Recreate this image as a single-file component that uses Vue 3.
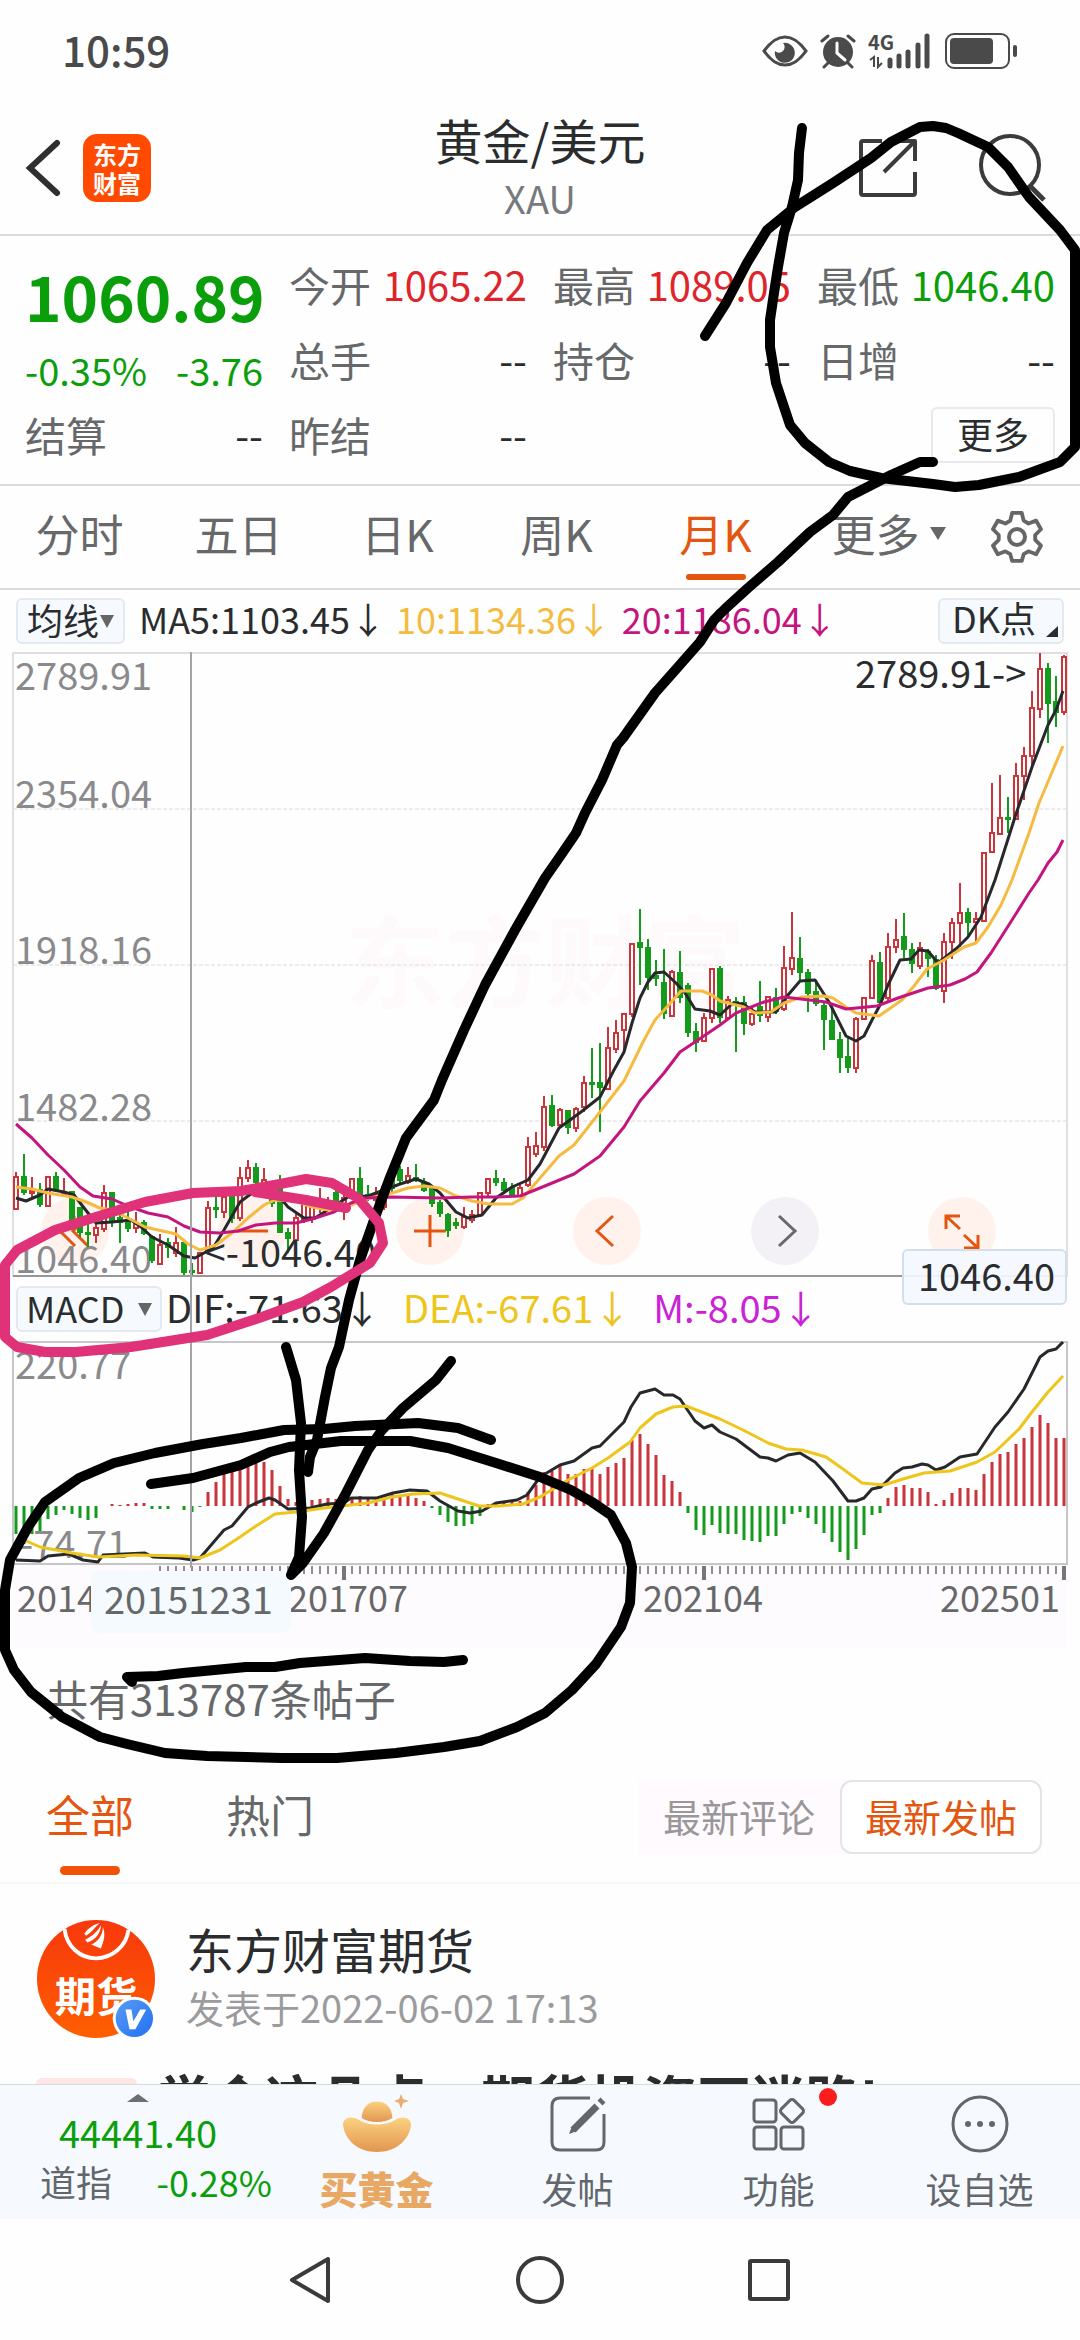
<template>
  <div class="page">
    <div class="status">
      <time>10:59</time>
      <div class="status__icons">
        <svg width="46" height="34" viewBox="0 0 46 34">
          <path d="M2 17C10 6 16 3 23 3s13 3 21 14C36 28 30 31 23 31S10 28 2 17z" fill="none" stroke="#4a4a4a" stroke-width="3" />
          <path d="M21 9a10 10 0 1 1-8 8a5 5 0 0 0 8-8z" fill="#4a4a4a" />
        </svg>
        <svg width="36" height="36" viewBox="0 0 36 36">
          <circle cx="18" cy="19" r="15" fill="#4a4a4a" />
          <path d="M2 8l6-5M34 8l-6-5M8 30l-4 4M28 30l4 4" stroke="#4a4a4a" stroke-width="3" stroke-linecap="round" />
          <path d="M17 10v10l8 7" fill="none" stroke="#fff" stroke-width="3" stroke-linecap="round" />
        </svg>
        <svg width="64" height="36" viewBox="0 0 64 36">
          <text x="0" y="17" font-size="20" font-weight="700" fill="#4a4a4a">4G</text>
          <path d="M2 27l4-3v10M10 24v10l4-4" fill="none" stroke="#4a4a4a" stroke-width="2" />
          <path d="M22 27v6M31 23v10M40 19v14M50 12v21M59 3v30" stroke="#4a4a4a" stroke-width="5" stroke-linecap="round" />
        </svg>
        <svg width="74" height="38" viewBox="0 0 74 38">
          <rect x="2" y="2" width="63" height="34" rx="8" fill="none" stroke="#4a4a4a" stroke-width="2" />
          <rect x="6" y="6" width="43" height="26" rx="4" fill="#4a4a4a" />
          <rect x="69" y="13" width="4" height="12" rx="2" fill="#4a4a4a" />
        </svg>
      </div>
    </div>

    <header class="header">
      <div class="header__left">
        <button class="icon-btn" aria-label="返回">
          <svg width="36" height="60" viewBox="0 0 36 60"><path d="M32 5L5 30l27 25" fill="none" stroke="#2d2f31" stroke-width="6" stroke-linecap="round" /></svg>
        </button>
        <a class="logo" href="#"><span>东方</span><span>财富</span></a>
      </div>
      <div class="header__title">
        <h1>黄金/美元</h1>
        <p>XAU</p>
      </div>
      <div class="header__right">
        <button class="icon-btn" aria-label="分享">
          <svg width="60" height="60" viewBox="0 0 60 60" fill="none" stroke="#3a3b3d" stroke-width="4" stroke-linejoin="round">
            <path d="M24 3H5q-2 0-2 2v50q0 2 2 2h50q2 0 2-2V34M36 3h21v20M57 3L26 34" />
          </svg>
        </button>
        <button class="icon-btn" aria-label="搜索">
          <svg width="70" height="70" viewBox="0 0 70 70" fill="none" stroke="#3a3b3d" stroke-width="4">
            <circle cx="32" cy="32" r="29" /><path d="M52 53l14 14" stroke-width="5" />
          </svg>
        </button>
      </div>
    </header>

    <main class="main">
      <section class="quote">
        <div class="quote__main">
          <strong>1060.89</strong>
          <div class="quote__change"><span>-0.35%</span><span>-3.76</span></div>
          <div class="quote__item"><span>结算</span><b>--</b></div>
        </div>
        <div v-for="(col, c) in quotes" :key="c" class="quote__col">
          <div v-for="q in col" :key="q.label" class="quote__item">
            <span>{{ q.label }}</span><b :class="q.tone">{{ q.value }}</b>
          </div>
          <button v-if="c === 2" class="more">更多</button>
        </div>
      </section>

      <nav class="periods">
        <button
          v-for="p in periods"
          :key="p"
          class="periods__tab"
          :class="{ 'periods__tab--on': p === '月K', 'periods__tab--more': p === '更多' }"
        >
          {{ p }}<svg v-if="p === '更多'" width="16" height="13"><path d="M0 0h16l-8 13z" fill="#666" /></svg>
        </button>
        <button class="icon-btn periods__gear" aria-label="设置">
          <svg width="52" height="54" viewBox="0 0 52 54" fill="none" stroke="#666" stroke-width="4">
            <path d="M21 2h10l2 8 5 3 8-3 5 9-6 6v5l6 6-5 9-8-3-5 3-2 7H21l-2-7-5-3-8 3-5-9 6-6v-5l-6-6 5-9 8 3 5-3z" stroke-linejoin="round" transform="translate(1 1) scale(.96)" />
            <circle cx="26" cy="27" r="8" />
          </svg>
        </button>
      </nav>

      <section class="charts">
        <div class="legend">
          <label class="pick">
            <select aria-label="主图指标"><option>均线</option></select>
            <svg width="14" height="13"><path d="M0 0h14l-7 13z" fill="#666" /></svg>
          </label>
          <span>MA5:1103.45↓</span>
          <span class="legend--ma10">10:1134.36↓</span>
          <span class="legend--ma20">20:1186.04↓</span>
          <button class="dk">DK点<svg width="12" height="11"><path d="M12 0v11H0z" fill="#2a2c2e" /></svg></button>
        </div>

        <div class="price">
          <div class="tools">
            <button v-for="t in tools" :key="t.name" class="tools__btn" :class="{ 'tools__btn--off': t.name === '后移' }" :aria-label="t.name">
              <svg width="68" height="68" viewBox="0 0 68 68"><path :d="t.d" /></svg>
            </button>
          </div>
          <svg class="price__svg" viewBox="0 0 1080 625">
            <text class="watermark" x="545" y="348" text-anchor="middle">东方财富</text>
            <path d="M13 157H1067M13 313H1067M13 469H1067" stroke="#ececee" stroke-width="2" stroke-dasharray="4 2" />
            <path d="M13 625V1H1067V625" fill="none" stroke="#dfdfe2" stroke-width="2" />
            <text v-for="a in priceAxis" :key="a.y" class="axis" x="15" :y="a.y">{{ a.t }}</text>
            <g v-for="(c, i) in candles" :key="i" :class="c[0] ? 'up' : 'down'">
              <path :d="`M${16 + i * 8} ${c[1]}V${c[2]}M${16 + i * 8} ${c[3]}V${c[4]}`" />
              <rect :x="14 + i * 8" :y="c[2]" width="4" :height="Math.max(1, c[3] - c[2])" />
            </g>
            <polyline class="line" :points="ma5" stroke="#26282b" />
            <polyline class="line" :points="ma10" stroke="#f5bb41" />
            <polyline class="line" :points="ma20" stroke="#c4157f" />
            <path d="M13 624H1067" stroke="#97979a" stroke-width="2" />
            <text class="mark" x="855" y="36">2789.91-></text>
            <text class="mark" x="376" y="615" text-anchor="end">&lt;-1046.40</text>
          </svg>
          <span class="price__tag">1046.40</span>
        </div>

        <div class="legend legend--macd">
          <label class="pick pick--macd">
            <select aria-label="副图指标"><option>MACD</option></select>
            <svg width="14" height="13"><path d="M0 0h14l-7 13z" fill="#666" /></svg>
          </label>
          <span>DIF:-71.63↓</span>
          <span class="legend--dea">DEA:-67.61↓</span>
          <span class="legend--m">M:-8.05↓</span>
        </div>

        <div class="macd">
          <svg viewBox="0 0 1080 307">
            <rect x="13" y="224" width="1054" height="83" fill="#fefbfe" />
            <rect x="13" y="1" width="1054" height="222" fill="none" stroke="#c6c6c9" stroke-width="2" />
            <text class="axis" x="15" y="38">220.77</text>
            <text class="axis" x="20" y="217">-74.71</text>
            <path
              v-for="(h, i) in bars"
              :key="i"
              :d="`M${16 + i * 8} 165v${-h}`"
              :stroke="h > 0 ? '#c9353a' : '#149b1c'"
              stroke-width="3"
            />
            <polyline class="line" :points="dif" stroke="#26282b" />
            <polyline class="line" :points="dea" stroke="#edc51b" />
            <path :d="ticks" stroke="#8f8f92" stroke-width="2" />
            <path d="M344 225v14M704 225v14M1064 225v14" stroke="#77777a" stroke-width="4" />
            <text class="date" x="17" y="271">2014</text>
            <text class="date" x="288" y="271">201707</text>
            <text class="date" x="643" y="271">202104</text>
            <text class="date" x="1060" y="271" text-anchor="end">202501</text>
            <rect x="91" y="230" width="200" height="62" rx="8" fill="#f5faff" />
            <text class="date date--now" x="104" y="273">20151231</text>
          </svg>
        </div>
        <i class="crosshair"></i>
      </section>

      <p class="count">共有313787条帖子</p>

      <div class="feed-tabs">
        <button class="feed-tabs__tab feed-tabs__tab--on">全部</button>
        <button class="feed-tabs__tab">热门</button>
        <div class="sort">
          <button class="sort__btn">最新评论</button>
          <button class="sort__btn sort__btn--on">最新发帖</button>
        </div>
      </div>

      <article class="post">
        <div class="post__head">
          <svg class="avatar" width="120" height="122" viewBox="0 0 120 122">
            <defs>
              <linearGradient id="av" x1="0" y1="0" x2="0" y2="1"><stop offset="0" stop-color="#f7380d" /><stop offset="1" stop-color="#ff5f00" /></linearGradient>
              <linearGradient id="vb" x1="0" y1="0" x2="1" y2="1"><stop offset="0" stop-color="#5a9bf2" /><stop offset="1" stop-color="#2170f5" /></linearGradient>
            </defs>
            <circle cx="60" cy="60" r="60" fill="url(#av)" />
            <path d="M28 9c2 18 16 30 32 30s31-12 33-29" fill="none" stroke="#fff" stroke-width="4" />
            <path d="M48 14c5-7 11-10 16-11-5 4-8 9-14 13zM49 20c8-4 13-9 16-15 0 9-6 15-14 18zM55 25c7-3 12-10 12-18 3 8 1 14-2 22z" fill="#fff" />
            <text x="60" y="94" text-anchor="middle" font-size="42" font-weight="700" fill="#fff">期货</text>
            <circle cx="99" cy="100" r="22" fill="#fff" />
            <circle cx="99" cy="100" r="19" fill="url(#vb)" />
            <path d="M90 91h6l2 12 7-12h6l-11 20h-6z" fill="#fff" />
          </svg>
          <div>
            <h2>东方财富期货</h2>
            <p>发表于2022-06-02 17:13</p>
          </div>
        </div>
        <div class="post__title"><span class="post__tag">精华</span><h3>学会这几点，期货投资不迷路!</h3></div>
      </article>
    </main>

    <footer class="bar">
      <a class="bar__index" href="#">
        <svg width="22" height="8"><path d="M0 8L11 0l11 8z" fill="#6c7076" /></svg>
        <span class="bar__value">44441.40</span>
        <span class="bar__row"><span>道指</span><b>-0.28%</b></span>
      </a>
      <a class="bar__item bar__item--gold" href="#">
        <svg width="70" height="62" viewBox="0 0 70 62">
          <defs>
            <linearGradient id="gold" x1="0" y1="0" x2="0" y2="1"><stop offset="0" stop-color="#fbd27f" /><stop offset="1" stop-color="#e29550" /></linearGradient>
          </defs>
          <path d="M1 32c0-7 8-10 16-5 10 6 26 6 36 0 8-5 16-2 16 5C67 48 53 59 35 59S3 48 1 32z" fill="url(#gold)" />
          <path d="M19 25C20 14 26 8 35 8s15 6 16 17c-8 6-24 6-32 0z" fill="url(#gold)" stroke="#f6faff" />
          <path d="M59 1l2 5 6 2-6 2-2 6-2-6-5-2 5-2z" fill="#e8ad70" />
        </svg>
        <span>买黄金</span>
      </a>
      <a class="bar__item" href="#">
        <svg width="62" height="62" viewBox="0 0 62 62" fill="none" stroke="#63676c" stroke-width="3">
          <path d="M43 5H13q-8 0-8 8v36q0 8 8 8h36q8 0 8-8V21" />
          <path d="M26 37L50 13M53 10l3-3" stroke-width="7" /><path d="M22 41l3-8 5 5z" fill="#63676c" stroke="none" />
        </svg>
        <span>发帖</span>
      </a>
      <a class="bar__item" href="#">
        <svg width="62" height="62" viewBox="0 0 62 62" fill="none" stroke="#63676c" stroke-width="3">
          <rect x="6" y="7" width="22" height="22" rx="3" /><rect x="6" y="34" width="22" height="22" rx="3" /><rect x="33" y="34" width="22" height="22" rx="3" />
          <rect x="35" y="9" width="18" height="18" rx="3" transform="rotate(45 44 18)" />
        </svg>
        <i class="dot"></i>
        <span>功能</span>
      </a>
      <a class="bar__item" href="#">
        <svg width="62" height="62" viewBox="0 0 62 62" fill="#63676c">
          <circle cx="31" cy="31" r="27" fill="none" stroke="#63676c" stroke-width="3" />
          <circle cx="19" cy="31" r="3" /><circle cx="31" cy="31" r="3" /><circle cx="43" cy="31" r="3" />
        </svg>
        <span>设自选</span>
      </a>
    </footer>

    <nav class="sysnav">
      <button class="icon-btn" aria-label="返回键"><svg width="48" height="50" viewBox="0 0 48 50"><path d="M41 4v42L5 25z" /></svg></button>
      <button class="icon-btn" aria-label="主页键"><svg width="50" height="50" viewBox="0 0 50 50"><circle cx="25" cy="25" r="22" /></svg></button>
      <button class="icon-btn" aria-label="多任务键"><svg width="48" height="50" viewBox="0 0 48 50"><rect x="5" y="6" width="38" height="38" rx="1" /></svg></button>
    </nav>

    <!-- handwritten markup over the screen -->
    <svg class="ink" viewBox="0 0 1080 2340" preserveAspectRatio="xMidYMin meet">
      <polyline v-for="(s, i) in ink" :key="i" :points="s" stroke="#000" />
      <polyline :points="pink" stroke="#e03278" />
    </svg>
  </div>
</template>

<script setup>
const quotes = [
  [
    { label: '今开', value: '1065.22', tone: 'red' },
    { label: '总手', value: '--' },
    { label: '昨结', value: '--' }
  ],
  [
    { label: '最高', value: '1089.05', tone: 'red' },
    { label: '持仓', value: '--' }
  ],
  [
    { label: '最低', value: '1046.40', tone: 'green' },
    { label: '日增', value: '--' }
  ]
]

const periods = ['分时', '五日', '日K', '周K', '月K', '更多']

const tools = [
  { name: '最左', d: 'M34 19L19 34l15 15M47 19L32 34l15 15' },
  { name: '缩小', d: 'M18 34h32' },
  { name: '放大', d: 'M18 34h32M34 18v32' },
  { name: '前移', d: 'M40 19L24 34l16 15' },
  { name: '后移', d: 'M28 19l16 15-16 15' },
  { name: '全屏', d: 'M18 32V19h14M18 19l14 13M36 51h14V38M50 51L36 38' }
]

const priceAxis = [
  { t: '2789.91', y: 38 },
  { t: '2354.04', y: 156 },
  { t: '1918.16', y: 312 },
  { t: '1482.28', y: 469 },
  { t: '1046.40', y: 621 }
]

// rising flag, high, body top, body bottom, low
const candles = [
  [1, 520, 525, 557, 558], [0, 502, 525, 540, 543], [1, 525, 539, 541, 546], [0, 531, 538, 552, 555],
  [1, 525, 525, 554, 555], [0, 520, 525, 538, 540], [1, 526, 540, 542, 545], [0, 540, 540, 568, 578],
  [0, 555, 556, 580, 585], [0, 571, 581, 582, 595], [1, 571, 576, 583, 591], [1, 533, 541, 577, 580],
  [0, 541, 541, 570, 575], [0, 556, 566, 570, 591], [0, 555, 568, 576, 580], [1, 560, 571, 576, 581],
  [0, 568, 571, 581, 583], [0, 583, 585, 608, 611], [1, 582, 593, 612, 613], [0, 586, 591, 595, 606],
  [1, 575, 591, 601, 605], [0, 591, 591, 620, 624], [0, 611, 619, 620, 625], [1, 600, 601, 621, 622],
  [1, 549, 556, 598, 601], [0, 543, 556, 557, 566], [1, 540, 545, 560, 566], [0, 545, 545, 566, 571],
  [1, 515, 526, 566, 569], [1, 508, 516, 526, 530], [0, 511, 516, 530, 533], [1, 516, 528, 538, 541],
  [0, 535, 538, 551, 555], [0, 523, 535, 580, 581], [0, 576, 581, 586, 601], [1, 561, 566, 588, 591],
  [1, 546, 551, 568, 571], [1, 551, 555, 566, 571], [1, 536, 550, 555, 561], [1, 545, 550, 553, 558],
  [0, 533, 541, 551, 556], [1, 543, 546, 556, 568], [1, 526, 527, 545, 546], [0, 515, 527, 543, 545],
  [0, 533, 543, 545, 549], [1, 535, 543, 548, 553], [1, 531, 535, 555, 558], [0, 523, 525, 536, 540],
  [0, 514, 518, 528, 532], [1, 515, 524, 530, 532], [0, 512, 526, 528, 530], [0, 526, 531, 538, 540],
  [0, 535, 536, 551, 555], [0, 548, 551, 561, 565], [0, 561, 563, 578, 585], [0, 566, 571, 573, 577],
  [1, 555, 565, 575, 577], [1, 558, 563, 568, 571], [1, 540, 541, 563, 565], [1, 526, 527, 541, 544],
  [0, 518, 527, 530, 534], [0, 526, 531, 538, 542], [0, 531, 536, 543, 545], [1, 531, 536, 544, 545],
  [1, 485, 495, 533, 535], [1, 480, 494, 502, 505], [1, 444, 455, 495, 499], [0, 443, 454, 473, 475],
  [1, 456, 458, 473, 476], [0, 458, 459, 475, 482], [1, 455, 457, 476, 480], [1, 424, 431, 455, 460],
  [0, 396, 431, 432, 446], [0, 391, 431, 435, 480], [1, 375, 396, 437, 438], [1, 368, 381, 397, 401],
  [1, 361, 362, 378, 401], [1, 291, 292, 362, 365], [0, 257, 291, 295, 333], [0, 287, 296, 325, 338],
  [0, 308, 324, 326, 334], [0, 297, 331, 361, 367], [1, 318, 320, 364, 365], [0, 299, 321, 345, 351],
  [0, 331, 334, 380, 385], [0, 371, 380, 390, 400], [1, 361, 366, 389, 390], [1, 316, 317, 366, 371],
  [0, 314, 317, 365, 371], [1, 344, 348, 366, 368], [0, 345, 350, 351, 400], [0, 344, 351, 371, 383],
  [1, 356, 362, 372, 374], [0, 329, 355, 363, 370], [1, 345, 345, 365, 370], [0, 336, 346, 359, 362],
  [1, 294, 316, 357, 359], [1, 260, 306, 317, 323], [0, 285, 307, 320, 328], [0, 317, 321, 341, 360],
  [0, 328, 340, 351, 354], [0, 351, 354, 367, 398], [0, 356, 369, 387, 388], [0, 380, 388, 405, 421],
  [0, 386, 405, 415, 421], [1, 365, 367, 416, 421], [1, 345, 346, 367, 368], [1, 303, 309, 346, 347],
  [0, 300, 311, 350, 351], [1, 281, 295, 346, 351], [1, 267, 288, 295, 301], [0, 261, 285, 297, 306],
  [0, 291, 298, 311, 321], [1, 290, 296, 314, 317], [0, 297, 300, 306, 325], [0, 303, 308, 336, 338],
  [1, 281, 290, 339, 351], [1, 266, 271, 290, 307], [1, 231, 261, 271, 295], [0, 256, 261, 270, 286],
  [1, 260, 267, 270, 291], [1, 201, 201, 269, 270], [1, 131, 181, 200, 201], [1, 123, 166, 182, 183],
  [0, 145, 166, 167, 181], [1, 111, 124, 167, 168], [1, 95, 104, 124, 148], [1, 39, 56, 104, 114],
  [1, 1, 17, 57, 66], [0, 11, 17, 51, 91], [0, 24, 50, 60, 75], [1, 3, 5, 60, 63]
]

const ma5 = '16,546 26,549 40,543 48,537 64,540 74,543 88,561 96,571 112,570 131,568 141,575 152,585 168,593 184,604 195,606 213,596 224,578 240,550 256,538 272,536 288,555 304,566 315,566 331,556 348,545 368,544 384,538 400,532 416,527 429,532 440,541 456,560 468,566 482,563 496,546 512,535 528,528 540,512 559,476 581,460 600,445 614,418 624,400 632,371 640,346 648,330 655,321 664,320 676,331 685,341 695,357 710,359 720,363 733,351 743,352 755,360 776,360 788,343 800,329 815,328 829,350 846,384 856,389 864,384 872,368 880,353 888,333 900,308 911,307 919,298 928,299 938,311 957,296 968,285 981,265 995,228 1015,165 1032,115 1048,73 1056,58 1063,39'
const ma10 = '16,535 32,537 48,541 72,545 86,550 100,556 112,558 128,566 145,575 158,578 176,582 188,592 200,598 216,593 232,581 248,566 264,553 275,548 296,549 312,555 328,558 344,557 362,548 392,541 408,536 424,534 440,536 456,544 472,549 489,552 512,552 523,546 540,526 559,504 574,493 600,460 624,429 643,390 655,368 666,356 681,339 702,339 712,343 720,349 744,355 755,361 771,360 784,351 802,345 824,344 833,346 846,355 856,361 879,364 902,348 914,334 927,317 944,308 964,295 976,291 988,275 1001,253 1012,228 1029,181 1039,151 1050,125 1063,94'
const ma20 = '16,472 32,486 48,503 64,518 80,535 93,544 112,547 128,554 148,561 168,565 184,574 200,580 220,581 238,579 256,573 275,571 296,571 312,567 334,560 351,551 365,546 392,545 440,546 472,545 496,545 520,544 540,536 574,522 600,504 624,475 640,449 664,421 680,400 695,390 720,373 736,361 764,350 784,345 826,350 846,357 877,354 898,346 928,336 950,333 965,327 977,320 991,301 1012,268 1029,241 1038,228 1048,211 1057,200 1063,188'

const bars = [
  -28, -38, -28, -25, -13, -9, -4, -8, -12, -14, -12, 0, 2, 1, 2, 3, 3, -3, -3, -3, 0, -4,
  -6, -1, 14, 24, 32, 34, 39, 42, 43, 44, 36, 20, 7, 4, 4, 6, 7, 8, 7, 8, 8, 10,
  9, 8, 8, 12, 11, 10, 8, 5, -2, -9, -16, -20, -20, -18, -10, 2, 4, 4, 4, 5, 14, 21,
  34, 35, 41, 32, 32, 37, 37, 32, 39, 43, 48, 66, 72, 62, 51, 31, 25, 14, -7, -24, -29, -19,
  -27, -28, -28, -34, -35, -36, -30, -30, -18, -8, -6, -12, -18, -27, -36, -46, -54, -43, -29, -9, -7, 8,
  19, 21, 18, 18, 14, 2, 6, 13, 18, 18, 16, 32, 44, 52, 54, 62, 68, 79, 91, 83, 68, 68
]

const dif = '16,219 40,220 48,215 69,213 83,219 98,221 103,214 145,212 153,216 179,217 193,219 200,217 224,189 232,185 248,166 256,162 269,157 275,159 288,168 310,167 327,163 344,162 351,157 377,157 393,152 410,149 427,150 440,160 458,170 470,172 482,170 496,162 517,159 527,154 540,136 560,124 574,120 592,107 600,105 624,81 631,66 640,52 655,48 664,54 673,54 680,58 695,80 704,87 712,84 720,91 736,98 760,116 768,117 776,120 788,114 800,112 815,121 833,140 848,160 856,160 864,157 872,148 881,146 895,132 903,127 912,126 922,123 928,124 936,129 945,126 960,116 977,113 995,86 1008,71 1024,48 1040,16 1048,10 1056,8 1063,1'
const dea = '16,198 24,199 40,206 72,212 98,216 136,214 184,215 200,217 220,209 240,196 256,185 275,173 296,171 324,167 368,162 392,156 413,153 440,152 458,158 479,165 499,165 523,163 540,156 568,139 592,127 608,117 630,101 640,87 656,73 673,66 686,65 720,78 743,89 768,102 786,108 802,109 826,116 843,128 862,142 884,144 903,138 924,132 950,130 977,121 995,111 1019,88 1032,71 1048,51 1063,35'

const ticks = candles.map((_, i) => (i < 18 ? '' : `M${16 + i * 8} 225v8`)).join('')

const ink = [
  '802,128 799,153 798,180 792,207 784,233 778,267 774,293 770,320 770,347 776,383 790,425 805,443 829,462 850,471 881,478 933,484 955,487 979,485 1019,477 1060,462 1075,447 1075,250 1060,230 1029,197 1008,167 988,147 958,133 946,128 933,126 920,127 891,142 871,158 833,183 795,207 767,230 747,263 726,303 705,336',
  '933,462 920,462 891,475 848,497 833,515 810,532 778,562 748,588 726,608 714,620 700,642 678,667 655,693 623,738 617,745 602,780 585,813 576,833 561,855 545,878 515,930 485,985 464,1030 442,1080 434,1100 406,1138 389,1180 374,1220 360,1260 349,1300 339,1347 331,1368 325,1397 317,1440 310,1457 308,1472',
  '286,1347 296,1380 301,1423 299,1470 302,1517 299,1557 291,1575 303,1563 324,1533 344,1497 368,1450 382,1430 403,1408 436,1380 451,1361',
  '491,1440 458,1428 418,1423 355,1426 324,1429 284,1430 241,1438 203,1444 155,1453 114,1463 79,1478 45,1502 28,1527 10,1560 5,1590 5,1650 14,1670 31,1692 62,1717 100,1737 127,1744 165,1753 207,1756 282,1758 337,1758 396,1753 444,1747 480,1741 517,1727 545,1713 572,1690 596,1664 621,1627 630,1603 632,1567 626,1543 611,1515 592,1502 571,1490 540,1477 496,1463 448,1448 410,1441 341,1441 289,1447 270,1452 241,1465 193,1478 151,1484',
  '132,1682 127,1677 158,1676 183,1673 246,1667 275,1667 300,1663 365,1658 410,1661 444,1662 463,1660'
]
const pink = '346,1208 306,1200 255,1192 280,1184 306,1179 332,1183 358,1198 379,1223 383,1243 370,1263 331,1287 303,1302 262,1317 207,1335 131,1347 76,1352 45,1352 17,1347 5,1337 5,1265 17,1250 55,1230 96,1217 145,1202 193,1193 241,1191 280,1184'
</script>

<style>
body {
  background: #fff;
}
</style>

<style scoped>
.page {
  position: relative;
  display: flex;
  flex-direction: column;
  height: 100vh;
  overflow: hidden;
  background: #fefefe;
  color: #2a2c2e;
  font-family: 'Noto Sans CJK SC', 'Noto Sans', sans-serif;
}

h1, h2, h3, p {
  margin: 0;
  font-weight: 400;
}

button, select {
  padding: 0;
  border: 0;
  background: none;
  color: inherit;
  font: inherit;
}

a {
  color: inherit;
  text-decoration: none;
}

svg {
  display: block;
  flex: none;
}

.icon-btn {
  display: flex;
}

.status {
  flex: none;
  display: flex;
  align-items: center;
  justify-content: space-between;
  height: 102px;
  padding: 0 62px;
  color: #4a4a4a;
  font-size: 42px;
  font-weight: 500;
}

.status time {
  padding-bottom: 6px;
}

.status__icons {
  display: flex;
  align-items: center;
  gap: 12px;
}

.header {
  flex: none;
  display: grid;
  grid-template-columns: 1fr auto 1fr;
  align-items: center;
  height: 132px;
  border-bottom: 2px solid #dcdcde;
}

.header__left {
  display: flex;
  align-items: center;
  gap: 22px;
  padding-left: 25px;
}

.logo {
  display: flex;
  flex-direction: column;
  align-items: center;
  justify-content: center;
  width: 68px;
  height: 68px;
  border-radius: 14px;
  background: #ff4a00;
  color: #fff;
  font-size: 24px;
  font-weight: 700;
  line-height: 29px;
}

.header__title {
  text-align: center;
}

.header__title h1 {
  font-size: 48px;
  line-height: 60px;
}

.header__title p {
  color: #77797c;
  font-size: 38px;
  line-height: 58px;
}

.header__right {
  display: flex;
  align-items: center;
  justify-content: flex-end;
  gap: 60px;
  padding-right: 32px;
}

.main {
  flex: 1;
  min-height: 0;
  overflow: hidden;
}

.quote {
  display: grid;
  grid-template-columns: repeat(4, minmax(0, 1fr));
  gap: 26px;
  padding: 10px 25px 13px;
  border-bottom: 2px solid #dcdcde;
}

.quote__main strong {
  display: block;
  color: #0a9f0a;
  font-size: 62px;
  font-weight: 700;
  line-height: 98px;
}

.quote__change {
  display: flex;
  justify-content: space-between;
  color: #0a9f0a;
  font-size: 38px;
  line-height: 52px;
}

.quote__item {
  display: flex;
  justify-content: space-between;
  align-items: center;
  height: 75px;
  color: #66686a;
  font-size: 41px;
}

.quote__item b {
  color: #2a2c2e;
  font-size: 40px;
  font-weight: 400;
}

.quote__item .red {
  color: #e0242c;
}

.quote__item .green {
  color: #0a9f0a;
}

.more {
  display: block;
  width: 124px;
  height: 56px;
  margin: 11px 0 0 auto;
  padding-bottom: 4px;
  border: 2px solid #e9e9eb;
  border-radius: 6px;
  font-size: 36px;
  line-height: 46px;
}

.periods {
  display: grid;
  grid-template-columns: repeat(6, 159fr) 126fr;
  align-items: center;
  height: 102px;
  border-bottom: 2px solid #dcdcde;
}

.periods__tab {
  position: relative;
  display: flex;
  align-items: center;
  justify-content: center;
  gap: 10px;
  height: 102px;
  padding-bottom: 8px;
  color: #66686a;
  font-size: 44px;
}

.periods__tab--more {
  padding-left: 28px;
}

.periods__tab--on {
  color: #e4560f;
}

.periods__tab--on::after {
  content: '';
  position: absolute;
  bottom: 8px;
  width: 60px;
  height: 6px;
  border-radius: 3px;
  background: #e4560f;
}

.periods__gear {
  justify-content: center;
}

.charts {
  position: relative;
}

.legend {
  display: flex;
  align-items: center;
  gap: 10px;
  height: 62px;
  padding: 0 16px;
  font-size: 36px;
  white-space: nowrap;
}

.legend span {
  padding-bottom: 6px;
}

.legend--macd {
  gap: 22px;
  height: 64px;
  font-size: 38px;
}

.pick {
  display: flex;
  align-items: center;
  justify-content: space-between;
  box-sizing: border-box;
  width: 109px;
  height: 46px;
  margin-right: 4px;
  padding: 0 9px;
  border: 2px solid #e4e9ef;
  border-radius: 6px;
  background: #f6faff;
  font-size: 36px;
}

.pick--macd {
  width: 146px;
  margin-right: -18px;
  padding: 0 8px;
}

.pick select {
  appearance: none;
  padding-bottom: 4px;
  line-height: 42px;
}

.dk {
  display: flex;
  align-items: flex-end;
  justify-content: space-between;
  box-sizing: border-box;
  width: 126px;
  height: 46px;
  margin-left: auto;
  padding: 0 4px 5px 12px;
  border: 2px solid #e4e9ef;
  border-radius: 6px;
  background: #f6faff;
  line-height: 40px;
}

.legend--ma10 {
  color: #f5bb41;
}

.legend--ma20 {
  color: #c4157f;
}

.legend--dea {
  color: #edc51b;
}

.legend--m {
  color: #ca22d4;
}

.price {
  position: relative;
}

.price__svg,
.macd svg {
  position: relative;
  width: 100%;
  height: auto;
  pointer-events: none;
}

.tools {
  position: absolute;
  left: 41px;
  right: 84px;
  bottom: 12px;
  display: flex;
  justify-content: space-between;
}

.tools__btn {
  border-radius: 50%;
  background: #fff2ed;
}

.tools__btn path {
  fill: none;
  stroke: #e4560f;
  stroke-width: 3;
}

.tools__btn--off {
  background: #f4f1f6;
}

.tools__btn--off path {
  stroke: #66686a;
}

.price__tag {
  position: absolute;
  right: 13px;
  bottom: -28px;
  z-index: 1;
  padding: 0 10px 4px 14px;
  border: 2px solid #d3dfe8;
  border-radius: 6px;
  background: rgba(244, 249, 255, 0.92);
  font-size: 38px;
  line-height: 48px;
}

.watermark {
  fill: #fefafb;
  font-size: 100px;
  font-weight: 700;
}

.axis {
  fill: #8a8a8d;
  font-size: 38px;
}

.mark {
  fill: #2a2c2e;
  font-size: 38px;
}

.date {
  fill: #66686a;
  font-size: 36px;
}

.date--now {
  font-size: 38px;
}

.up path,
.up rect {
  fill: #fff;
  stroke: #c9353a;
  stroke-width: 2;
}

.down path,
.down rect {
  fill: #149b1c;
  stroke: #149b1c;
  stroke-width: 2;
}

.line {
  fill: none;
  stroke-width: 3;
  stroke-linejoin: round;
}

.crosshair {
  position: absolute;
  top: 62px;
  left: 17.6%;
  bottom: 80px;
  width: 2px;
  background: #a5a5a8;
}

.count {
  padding: 0 0 8px 46px;
  color: #66686a;
  font-size: 42px;
  line-height: 100px;
}

.feed-tabs {
  display: flex;
  align-items: center;
  gap: 92px;
  height: 126px;
  padding: 0 38px 0 46px;
  border-bottom: 2px solid #f5f6f8;
}

.feed-tabs__tab {
  position: relative;
  display: flex;
  justify-content: center;
  padding-bottom: 10px;
  color: #66686a;
  font-size: 44px;
  line-height: 112px;
}

.feed-tabs__tab--on {
  color: #e4560f;
}

.feed-tabs__tab--on::after {
  content: '';
  position: absolute;
  bottom: 5px;
  width: 60px;
  height: 9px;
  border-radius: 5px;
  background: #f05206;
}

.sort {
  display: flex;
  margin: 0 0 4px auto;
  background: #fefafd;
}

.sort__btn {
  box-sizing: border-box;
  width: 202px;
  height: 74px;
  padding-bottom: 4px;
  border: 2px solid transparent;
  border-radius: 12px;
  color: #9a979b;
  font-size: 38px;
}

.sort__btn--on {
  border-color: #e5e3e5;
  background: #fff;
  color: #e4560f;
}

.post {
  padding: 36px 36px 0;
}

.post__head {
  display: flex;
  gap: 30px;
}

.avatar {
  height: 120px;
}

.post__head h2 {
  font-size: 48px;
  line-height: 56px;
}

.post__head p {
  color: #9b9b9e;
  font-size: 38px;
  line-height: 62px;
}

.post__title {
  display: flex;
  align-items: flex-start;
  gap: 20px;
  padding-top: 26px;
}

.post__title h3 {
  font-size: 54px;
  font-weight: 700;
  line-height: 64px;
  white-space: nowrap;
}

.post__tag {
  flex: none;
  width: 101px;
  margin-top: 12px;
  border-radius: 6px;
  background: #fde6e4;
  font-size: 34px;
  line-height: 44px;
  text-align: center;
}

.bar {
  flex: none;
  display: grid;
  grid-template-columns: 276fr 201fr 201fr 201fr 201fr;
  height: 134px;
  border-top: 1px solid #d3dbdf;
  background: #f6faff;
  color: #63676c;
  font-size: 36px;
}

.bar__index {
  display: flex;
  flex-direction: column;
  align-items: center;
  padding-top: 9px;
}

.bar__value {
  color: #0a9f0a;
  font-size: 38px;
  line-height: 60px;
}

.bar__row {
  display: flex;
  justify-content: space-between;
  width: 232px;
  padding-left: 36px;
  line-height: 38px;
}

.bar__row b {
  color: #0a9f0a;
  font-weight: 400;
}

.bar__item {
  position: relative;
  display: flex;
  flex-direction: column;
  align-items: center;
  padding-top: 8px;
  line-height: 66px;
}

.bar__item--gold {
  color: #e8a864;
  font-size: 38px;
  font-weight: 900;
}

.dot {
  position: absolute;
  top: 3px;
  left: 70%;
  width: 18px;
  height: 18px;
  border-radius: 50%;
  background: #fb1d1d;
}

.sysnav {
  flex: none;
  display: flex;
  align-items: center;
  justify-content: center;
  gap: 180px;
  height: 121px;
}

.sysnav svg {
  fill: none;
  stroke: #3a3a3c;
  stroke-width: 4;
  stroke-linejoin: round;
}

.ink {
  position: absolute;
  top: 0;
  left: 0;
  z-index: 2;
  width: 100%;
  height: auto;
  pointer-events: none;
}

.ink polyline {
  fill: none;
  stroke-width: 10;
  stroke-linecap: round;
  stroke-linejoin: round;
}
</style>
